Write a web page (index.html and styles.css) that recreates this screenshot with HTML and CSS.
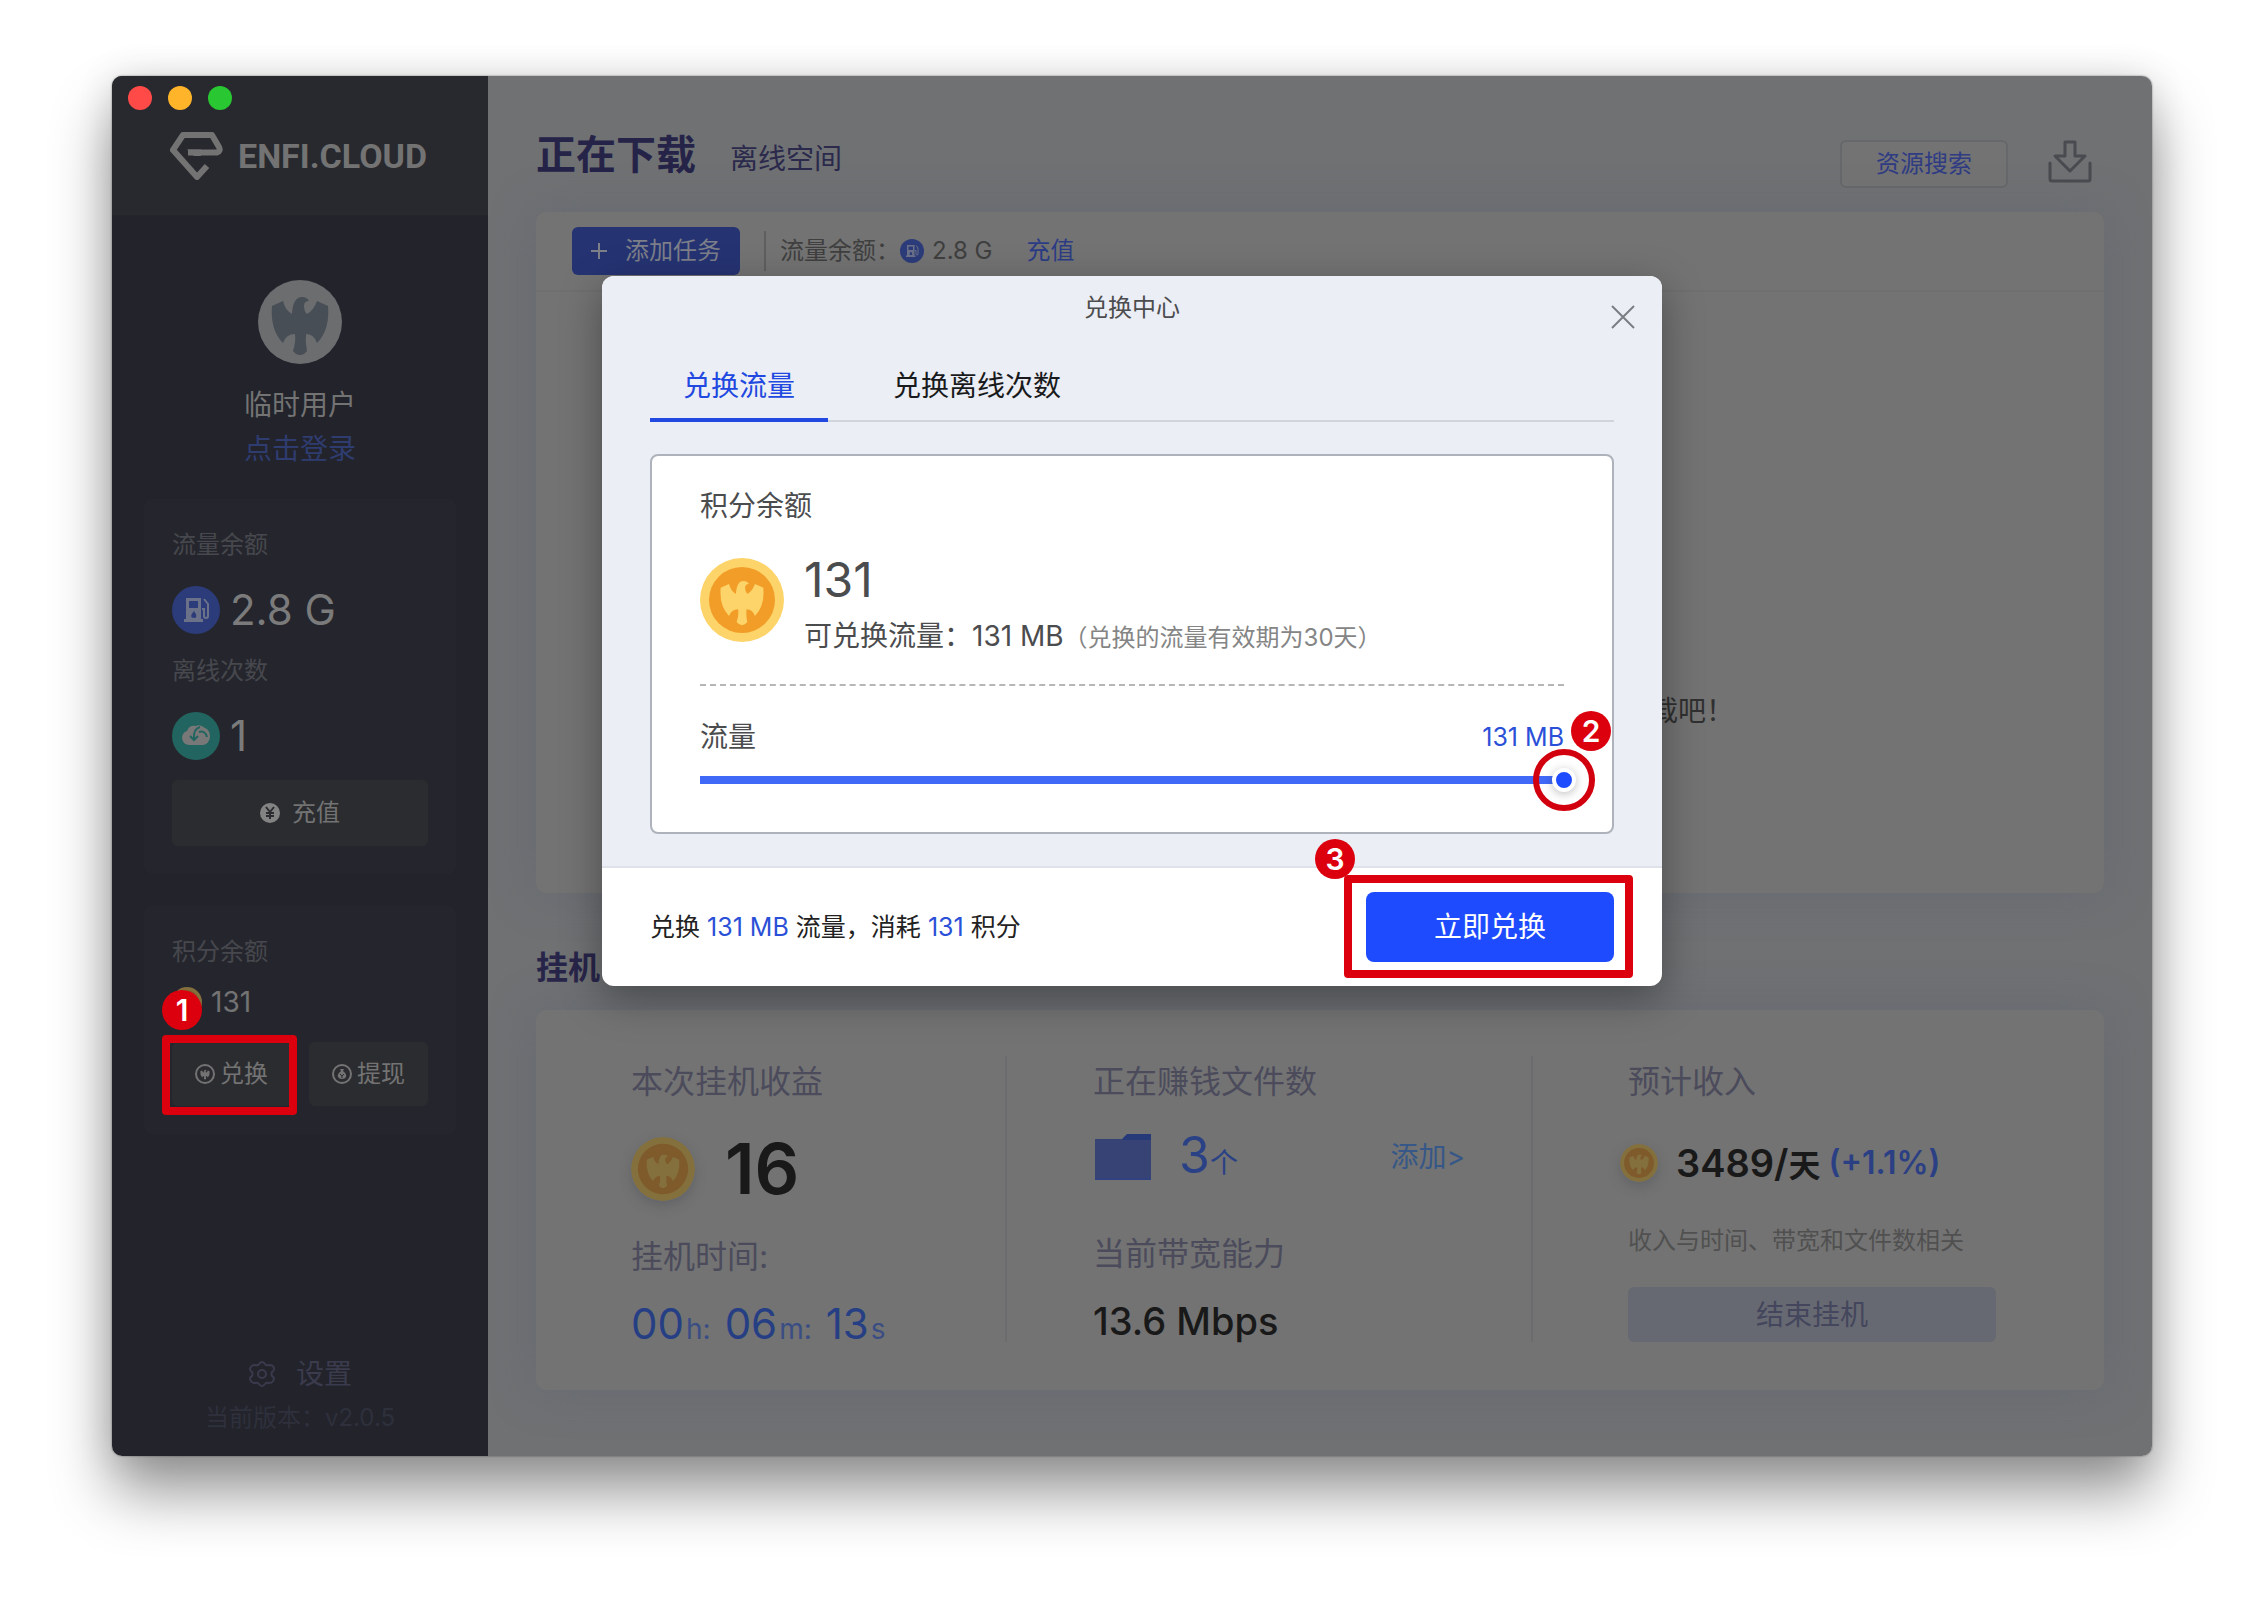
FILE: index.html
```html
<!DOCTYPE html>
<html lang="zh-CN">
<head>
    <meta charset="UTF-8">
    <meta name="viewport" content="width=device-width, initial-scale=1.0">
    <title>ENFI.CLOUD</title>
    <link rel="stylesheet" href="styles.css">
</head>
<body>
    <!-- shared icons -->
    <svg class="defs" aria-hidden="true">
        <symbol id="eagle" viewBox="0 0 84 84">
            <path d="M14 26L25 21Q27 30 34 34Q35 17 44 17Q49 17 51 21Q46 21 46 26Q46 31 49 34Q56 30 59 21L70 26Q72 50 59 63Q56 54 48 54Q47 62 49 71Q46 75 42 75Q38 75 35 71Q38 62 37 54Q28 54 25 63Q12 50 14 26Z"/>
        </symbol>
        <symbol id="coin" viewBox="0 0 84 84">
            <circle class="coin-rim" cx="42" cy="42" r="42"/>
            <circle class="coin-face" cx="42" cy="42" r="33"/>
            <use class="coin-bird" href="#eagle" x="10" y="10" width="64" height="64"/>
        </symbol>
        <symbol id="fuel" viewBox="0 0 48 48">
            <circle class="fuel-bg" cx="24" cy="24" r="24"/>
            <path class="fuel-fg" fill-rule="evenodd" d="M14 12h15v21h2v3H12v-3h2zM17 15v7h9v-7zM22 25q-6 7 0 7q5 0 0-7z"/>
            <path class="fuel-hose" d="M30 23h2v7q0 2 2 2t2-2V18l-4-5"/>
        </symbol>
    </svg>

    <div class="window">
        <aside class="sidebar">
            <div class="side-head">
                <div class="lights">
                    <span class="light red"></span>
                    <span class="light yellow"></span>
                    <span class="light green"></span>
                </div>
                <div class="logo">
                    <svg width="54" height="48" viewBox="0 0 54 48" fill="none" stroke="#737373" stroke-width="6" stroke-linejoin="round">
                        <path d="M18 20.500H47Q51 19 49 15L42 3H13L3 18L27 45L37 34"/>
                        <path d="M17 17.500L24 24H31V17.500Z" fill="#737373" stroke="none"/>
                    </svg>
                    <span>ENFI.CLOUD</span>
                </div>
            </div>

            <div class="user">
                <div class="avatar"><svg width="84" height="84"><use href="#eagle"/></svg></div>
                <div class="user-name">临时用户</div>
                <a href="#" class="login">点击登录</a>
            </div>

            <section class="side-card">
                <div class="side-label">流量余额</div>
                <div class="side-value">
                    <svg width="48" height="48"><use href="#fuel"/></svg>
                    <span>2.8 G</span>
                </div>
                <div class="side-label second">离线次数</div>
                <div class="side-value">
                    <svg width="48" height="48" viewBox="0 0 48 48">
                        <circle cx="24" cy="24" r="24" fill="#22645f"/>
                        <path d="M17 33Q10 32 10 25Q11 20 15 19Q17 13 24 14Q28 12 33 16Q38 18 38 25Q37 32 31 33Z" fill="#787878"/>
                        <path d="M28 15Q21 17 22 27M18 24L22 28L26 24M27 20Q33 18 35 25" fill="none" stroke="#22645f" stroke-width="2"/>
                    </svg>
                    <span>1</span>
                </div>
                <button type="button" class="side-btn wide">
                    <svg width="20" height="20" viewBox="0 0 20 20">
                        <circle cx="10" cy="10" r="10" fill="#838383"/>
                        <path d="M6 4L10 9L14 4M10 9V16M6 10H14M6 13H14" fill="none" stroke="#2b2c30" stroke-width="2"/>
                    </svg>
                    充值
                </button>
            </section>

            <section class="side-card">
                <div class="side-label">积分余额</div>
                <div class="points">
                    <svg width="30" height="30"><use href="#coin"/></svg>
                    <span>131</span>
                    <span class="badge badge-1">1</span>
                </div>
                <div class="side-actions">
                    <div class="marked">
                        <button type="button" class="side-btn">
                            <svg width="20" height="20" viewBox="0 0 20 20">
                                <circle cx="10" cy="10" r="9" fill="none" stroke="#737373" stroke-width="2"/>
                                <use href="#eagle" x="3" y="3" width="14" height="14" fill="#737373"/>
                            </svg>
                            兑换
                        </button>
                        <span class="mark mark-exchange"></span>
                    </div>
                    <button type="button" class="side-btn">
                        <svg width="20" height="20" viewBox="0 0 20 20">
                            <circle cx="10" cy="10" r="9" fill="none" stroke="#737373" stroke-width="2"/>
                            <path d="M8 5H12L11 7Q15 10 14 13Q13 15 10 15T6 13Q5 10 9 7Z" fill="#737373"/>
                            <path d="M8 10L10 12L12 10M10 12V14" fill="none" stroke="#2b2c30"/>
                        </svg>
                        提现
                    </button>
                </div>
            </section>

            <div class="side-foot">
                <a href="#" class="settings">
                    <svg width="28" height="28" viewBox="0 0 28 28" fill="none" stroke="#393a4b" stroke-width="2" stroke-linejoin="round">
                        <path d="M11 4Q14 0 17 4Q18 6 21 5Q26 5 26 9Q26 11 24 12Q23 14 24 16Q26 17 26 19Q25 23 21 23Q18 22 17 24Q14 28 11 24Q10 22 7 23Q3 23 2 19Q2 17 4 16Q5 14 4 12Q2 11 2 9Q3 5 7 5Q10 6 11 4Z"/>
                        <circle cx="14" cy="14" r="4"/>
                    </svg>
                    设置
                </a>
                <div class="version">当前版本：v2.0.5</div>
            </div>
        </aside>

        <main class="main">
            <header class="main-head">
                <div class="nav">
                    <h1>正在下载</h1>
                    <a href="#" class="nav-link">离线空间</a>
                </div>
                <div class="head-tools">
                    <button type="button" class="search-btn">资源搜索</button>
                    <svg width="44" height="48" viewBox="0 0 44 48" fill="none" stroke="#494b50" stroke-width="3" stroke-linejoin="round" stroke-linecap="round">
                        <path d="M17 2H27V16H37L22 31L7 16H17ZM2 23V39Q2 41 4 41H40Q42 41 42 39V23"/>
                    </svg>
                </div>
            </header>

            <section class="panel downloads">
                <div class="toolbar">
                    <button type="button" class="add-btn">
                        <svg width="16" height="16" viewBox="0 0 16 16" stroke="#7d7f89" stroke-width="2"><path d="M8 0V16M0 8H16"/></svg>
                        添加任务
                    </button>
                    <span class="sep"></span>
                    <span>流量余额：</span>
                    <svg width="24" height="24"><use href="#fuel"/></svg>
                    <span class="traffic">2.8 G</span>
                    <a href="#" class="recharge">充值</a>
                </div>
                <p class="empty">载吧！</p>
            </section>

            <h2>挂机</h2>

            <section class="panel stats">
                <div class="stat">
                    <div class="stat-label">本次挂机收益</div>
                    <div class="income">
                        <svg class="coin" width="64" height="64"><use href="#coin"/></svg>
                        <strong>16</strong>
                    </div>
                    <div class="stat-label">挂机时间:</div>
                    <div class="timer">
                        <span>00<small>h:</small></span>
                        <span>06<small>m:</small></span>
                        <span>13<small>s</small></span>
                    </div>
                </div>
                <div class="stat files">
                    <div class="stat-label">正在赚钱文件数</div>
                    <div class="file-row">
                        <svg width="56" height="46" viewBox="0 0 56 46">
                            <path d="M26 6L32 0H56V12H26Z" fill="#263979"/>
                            <path d="M0 5H26L29 6H56V46H0Z" fill="#364374"/>
                            <path d="M0 44H56V46H0Z" fill="#30427f"/>
                        </svg>
                        <span class="count">3<small>个</small></span>
                        <a href="#" class="add-file">添加&gt;</a>
                    </div>
                    <div class="stat-label">当前带宽能力</div>
                    <div class="speed">13.6 Mbps</div>
                </div>
                <div class="stat forecast">
                    <div class="stat-label">预计收入</div>
                    <div class="rate">
                        <svg class="coin" width="38" height="38"><use href="#coin"/></svg>
                        <span class="per-day">3489/<small>天</small></span>
                        <span class="growth">(+1.1%)</span>
                    </div>
                    <div class="note">收入与时间、带宽和文件数相关</div>
                    <button type="button" class="stop-btn">结束挂机</button>
                </div>
            </section>
        </main>

        <div class="modal" role="dialog" aria-labelledby="modal-title">
            <div class="modal-body">
                <div class="modal-title" id="modal-title">兑换中心</div>
                <button type="button" class="close" aria-label="关闭">
                    <svg width="24" height="24" viewBox="0 0 24 24" stroke="#7b7d82" stroke-width="2"><path d="M1 1L23 23M23 1L1 23"/></svg>
                </button>
                <div class="tabs" role="tablist">
                    <button type="button" class="tab active" role="tab">兑换流量</button>
                    <button type="button" class="tab" role="tab">兑换离线次数</button>
                </div>
                <div class="box">
                    <div class="box-label">积分余额</div>
                    <div class="balance">
                        <svg width="84" height="84"><use href="#coin"/></svg>
                        <div>
                            <div class="amount">131</div>
                            <div class="available">可兑换流量：131 MB<span>（兑换的流量有效期为30天）</span></div>
                        </div>
                    </div>
                    <div class="slider-head">
                        <label for="traffic">流量</label>
                        <output for="traffic">131 MB</output>
                    </div>
                    <div class="slider">
                        <input type="range" id="traffic" min="0" max="131" value="131">
                        <span class="mark-ring"></span>
                        <span class="badge badge-2">2</span>
                    </div>
                </div>
            </div>
            <div class="modal-foot">
                <div>兑换 <b>131 MB</b> 流量，消耗 <b>131</b> 积分</div>
                <div class="marked">
                    <button type="button" class="confirm">立即兑换</button>
                    <span class="mark mark-confirm"></span>
                    <span class="badge badge-3">3</span>
                </div>
            </div>
        </div>
    </div>
</body>
</html>
```
FILE: styles.css
```css
* {
    box-sizing: border-box;
}
body {
    --coin-rim: #fcd469;
    --coin-face: #f29d28;
    font-family: Inter, "Noto Sans CJK SC", sans-serif;
    font-size: 24px;
    line-height: 36px;
    background-color: #fff;
    margin: 0;
    min-height: 100vh;
    padding: 76px 112px 148px;
    display: flex;
}
button {
    font-family: inherit;
    font-size: 24px;
    line-height: 36px;
    border: none;
    padding: 0;
    cursor: pointer;
    display: flex;
    align-items: center;
    justify-content: center;
}
a {
    text-decoration: none;
}
small {
    line-height: 1;
}
svg {
    display: block;
    flex: none;
}
.defs {
    position: absolute;
    width: 0;
    height: 0;
}
.window {
    position: relative;
    flex: 1;
    display: flex;
    border-radius: 10px;
    box-shadow: 0 0 2px rgba(0,0,0,0.5), 0 36px 60px rgba(0,0,0,0.42), 0 0 36px rgba(0,0,0,0.12);
}

/* icons */
.coin-rim { fill: var(--coin-rim); }
.coin-face { fill: var(--coin-face); }
.coin-bird { fill: var(--coin-rim); }
.sidebar, .main {
    --coin-rim: #84703d;
    --coin-face: #7f5a2b;
}
.coin {
    border-radius: 50%;
    box-shadow: 0 5px 12px rgba(70,72,80,0.35);
}
.fuel-bg { fill: #2c3c7a; }
.fuel-fg { fill: #6b7189; }
.fuel-hose {
    fill: none;
    stroke: #6b7189;
    stroke-width: 2;
}

/* sidebar */
.sidebar {
    width: 376px;
    flex: none;
    display: flex;
    flex-direction: column;
    background-color: #22232b;
    border-radius: 10px 0 0 10px;
    color: #737373;
}
.side-head {
    height: 140px;
    padding: 10px 16px;
    background-color: #28292e;
    border-bottom: 1px solid #232529;
    border-radius: 10px 0 0 0;
}
.lights {
    display: flex;
    gap: 16px;
}
.light {
    width: 24px;
    height: 24px;
    border-radius: 50%;
}
.red { background-color: #ff4a48; }
.yellow { background-color: #ffb429; }
.green { background-color: #29c732; }
.logo {
    display: flex;
    align-items: center;
    gap: 14px;
    margin: 22px 0 0 42px;
    height: 48px;
    font-family: Roboto, sans-serif;
    font-size: 34px;
    font-weight: bold;
}
.user {
    display: flex;
    flex-direction: column;
    align-items: center;
    padding: 64px 0 28px;
    font-size: 28px;
    line-height: 44px;
}
.avatar {
    border-radius: 50%;
    background-color: #6b6d6f;
    fill: #484e56;
    margin-bottom: 19px;
}
.login {
    color: #2f3c70;
}
.side-card {
    margin: 0 32px 32px;
    padding: 28px;
    background-color: #25262d;
    border-radius: 8px;
}
.side-label {
    color: #47484d;
    margin-bottom: 23px;
}
.side-label.second {
    margin-top: 19px;
}
.side-value {
    display: flex;
    align-items: center;
    gap: 10px;
    font-size: 42px;
    line-height: 48px;
    color: #7b7b7c;
}
.side-btn {
    width: 100%;
    height: 64px;
    gap: 5px;
    background-color: #2b2c30;
    color: #737373;
    border-radius: 6px;
}
.side-btn.wide {
    height: 66px;
    margin-top: 20px;
    gap: 12px;
}
.points {
    position: relative;
    display: flex;
    align-items: center;
    gap: 9px;
    height: 40px;
    margin: -11px 0 20px;
    font-size: 28px;
}
.side-actions {
    display: grid;
    grid-template-columns: 1fr 1fr;
    gap: 18px;
}
.side-foot {
    margin-top: auto;
    padding-bottom: 16px;
    text-align: center;
    line-height: 44px;
}
.settings {
    display: flex;
    justify-content: center;
    align-items: center;
    gap: 20px;
    font-size: 28px;
    color: #3a3b4d;
}
.version {
    color: #2e303c;
}

/* red numbered marks */
.marked {
    position: relative;
}
.mark {
    position: absolute;
    border: 8px solid #dc000f;
    border-radius: 4px;
    pointer-events: none;
}
.mark-exchange {
    inset: -7px -6px -9px -10px;
}
.mark-confirm {
    inset: -17px -19px -16px -22px;
}
.mark-ring {
    position: absolute;
    top: -19px;
    right: -31px;
    width: 62px;
    height: 62px;
    border: 6px solid #d2000f;
    border-radius: 50%;
    pointer-events: none;
}
.badge {
    position: absolute;
    width: 40px;
    height: 40px;
    border-radius: 50%;
    background-color: #dc000f;
    color: #fff;
    font-size: 30px;
    font-weight: 600;
    line-height: 40px;
    text-align: center;
}
.badge-1 {
    left: -10px;
    top: 8px;
}
.badge-2 {
    right: -47px;
    top: -57px;
}
.badge-3 {
    left: -51px;
    top: -53px;
}

/* main area */
.main {
    flex: 1;
    display: flex;
    flex-direction: column;
    padding: 0 48px 66px;
    background-color: #6f7173;
    border-radius: 0 10px 10px 0;
}
.main-head {
    height: 136px;
    padding: 0 12px 24px 0;
    display: flex;
    align-items: flex-end;
    justify-content: space-between;
}
.nav {
    display: flex;
    align-items: baseline;
    gap: 34px;
}
h1 {
    margin: 0;
    font-size: 40px;
    line-height: 66px;
    font-weight: 700;
    color: #262349;
}
.nav-link {
    font-size: 28px;
    color: #2b294c;
}
.head-tools {
    display: flex;
    align-items: center;
    gap: 40px;
}
.search-btn {
    width: 168px;
    height: 48px;
    background-color: #737373;
    border: 2px solid #66686b;
    border-radius: 6px;
    color: #2f3c84;
}
.panel {
    background-color: #737373;
    border-radius: 10px;
    box-shadow: 0 0 40px rgba(96,99,116,0.5);
}
.downloads {
    flex: 1;
    display: flex;
    flex-direction: column;
    justify-content: space-between;
}
.toolbar {
    display: flex;
    align-items: center;
    height: 80px;
    padding: 0 36px;
    border-bottom: 2px solid #6f6f70;
    color: #3f3f3f;
}
.add-btn {
    width: 168px;
    height: 48px;
    gap: 18px;
    background-color: #253373;
    border-radius: 6px;
    color: #7d7f89;
}
.sep {
    width: 2px;
    height: 40px;
    margin: 0 14px 0 24px;
    background-color: #5f5f60;
}
.traffic {
    margin: 0 34px 0 8px;
}
.recharge {
    color: #2c3c85;
}
.empty {
    margin: 0;
    padding: 0 370px 160px 0;
    text-align: right;
    font-size: 28px;
    line-height: 44px;
    color: #303030;
}
h2 {
    margin: 51px 0 18px;
    font-size: 32px;
    line-height: 48px;
    font-weight: 700;
    color: #28254a;
}
.stats {
    display: grid;
    grid-template-columns: 471fr 526fr 571fr;
    padding: 46px 0 48px;
}
.stat {
    padding: 2px 0 0 95px;
    border-right: 2px solid #6c6c6e;
}
.stat.files {
    padding-left: 86px;
    padding-right: 66px;
}
.stat.forecast {
    padding-right: 108px;
    border: none;
}
.stat-label {
    font-size: 32px;
    line-height: 48px;
    color: #4b4b5c;
}
.income {
    display: flex;
    align-items: center;
    gap: 30px;
    height: 72px;
    margin: 27px 0 28px;
}
.income strong {
    font-size: 70px;
    font-weight: 600;
    color: #191919;
}
.timer {
    display: flex;
    gap: 14px;
    height: 36px;
    margin-top: 25px;
    font-size: 42px;
    color: #263f84;
}
.timer small {
    font-size: 28px;
    color: #3a4d84;
    margin-left: 2px;
}
.file-row {
    display: flex;
    align-items: center;
    height: 48px;
    margin: 27px 0 49px 2px;
}
.count {
    margin-left: 28px;
    font-size: 50px;
    color: #2a4186;
}
.count small {
    font-size: 28px;
}
.add-file {
    margin-left: auto;
    font-size: 28px;
    color: #365787;
}
.speed {
    margin-top: 25px;
    font-size: 38px;
    font-weight: 500;
    color: #191919;
}
.rate {
    display: flex;
    align-items: center;
    height: 48px;
    margin: 33px 0 36px -8px;
    font-weight: 600;
}
.per-day {
    margin: 0 8px 0 18px;
    font-size: 38px;
    color: #191919;
}
.per-day small {
    font-size: 32px;
}
.growth {
    font-size: 32px;
    color: #2b3f84;
}
.note {
    color: #505050;
}
.stop-btn {
    width: 100%;
    height: 55px;
    margin-top: 28px;
    background-color: #676972;
    border-radius: 6px;
    font-size: 28px;
    color: #43465c;
}

/* exchange dialog */
.modal {
    position: absolute;
    top: 200px;
    left: 50%;
    transform: translateX(-50%);
    width: 1060px;
    border-radius: 12px;
    background-color: #fff;
    box-shadow: 0 12px 40px rgba(0,0,0,0.35);
    color: #4b4c4e;
}
.modal-body {
    position: relative;
    padding: 14px 48px 32px;
    background-color: #ebeef4;
    border-bottom: 2px solid #dfe2e8;
    border-radius: 12px 12px 0 0;
}
.modal-title {
    text-align: center;
}
.close {
    position: absolute;
    top: 29px;
    right: 27px;
    background: none;
}
.tabs {
    display: flex;
    margin: 28px 0 32px;
    border-bottom: 2px solid #d0d4db;
}
.tab {
    height: 68px;
    margin-bottom: -2px;
    padding: 0 65px;
    background: none;
    border-bottom: 4px solid transparent;
    font-size: 28px;
    color: #191a1c;
}
.tab.active {
    padding: 0 33px;
    border-color: #2148e0;
    color: #2148e0;
}
.box {
    padding: 28px 48px 40px;
    background-color: #fff;
    border: 2px solid #adb2bb;
    border-radius: 8px;
}
.box-label {
    font-size: 28px;
    line-height: 44px;
}
.balance {
    display: flex;
    gap: 20px;
    padding: 30px 0 24px;
    border-bottom: 2px dashed #b4b6b8;
}
.amount {
    font-size: 48px;
    line-height: 44px;
}
.available {
    font-size: 28px;
    line-height: 44px;
    margin-top: 12px;
}
.available span {
    font-size: 24px;
    color: #858585;
}
.slider-head {
    display: flex;
    justify-content: space-between;
    align-items: center;
    margin-top: 29px;
    font-size: 28px;
    line-height: 44px;
}
.slider-head output {
    font-size: 25px;
    color: #2b50d8;
}
.slider {
    position: relative;
    margin-top: 9px;
    height: 24px;
}
.slider input {
    -webkit-appearance: none;
    appearance: none;
    display: block;
    width: calc(100% + 12px);
    height: 24px;
    margin: 0;
    background: linear-gradient(#4069f8, #4069f8) left center / calc(100% - 12px) 8px no-repeat;
}
.slider input::-webkit-slider-thumb {
    -webkit-appearance: none;
    width: 24px;
    height: 24px;
    border: 4px solid #fff;
    border-radius: 50%;
    background-color: #1f4bff;
    box-shadow: 0 2px 10px rgba(0,0,0,0.25);
}
.modal-foot {
    display: flex;
    align-items: center;
    justify-content: space-between;
    padding: 24px 48px;
    font-size: 25px;
    color: #222;
}
.modal-foot b {
    font-weight: 400;
    color: #2b50d8;
}
.confirm {
    width: 248px;
    height: 70px;
    background-color: #1f4bff;
    border-radius: 8px;
    font-size: 28px;
    color: #fff;
}
```
